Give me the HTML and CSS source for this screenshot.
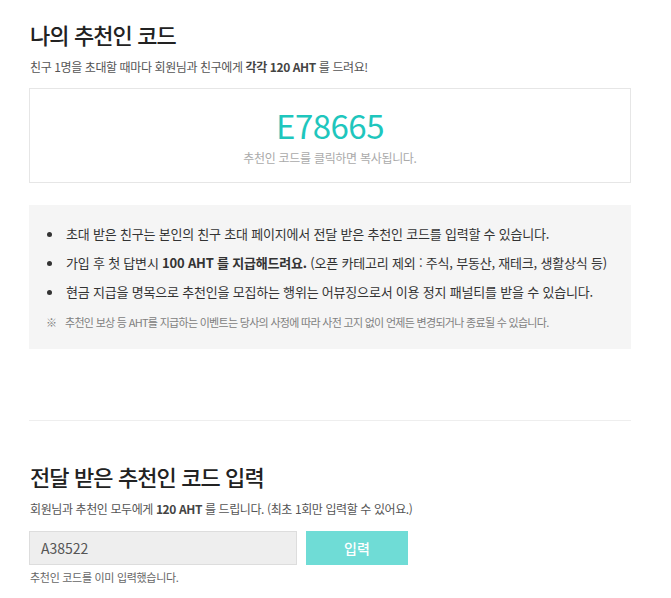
FILE: index.html
```html
<!DOCTYPE html>
<html lang="ko">
<head>
<meta charset="utf-8">
<link rel="stylesheet" href="styles.css">
</head>
<body>
<div class="page">
  <section class="section">
    <h2 class="title">나의 추천인 코드</h2>
    <p class="desc">친구 1명을 초대할 때마다 회원님과 친구에게 <b>각각 120 AHT</b> 를 드려요!</p>
    <div class="code-box">
      <div class="code">E78665</div>
      <div class="code-hint">추천인 코드를 클릭하면 복사됩니다.</div>
    </div>
    <div class="notice">
      <ul class="notice-list">
        <li>초대 받은 친구는 본인의 친구 초대 페이지에서 전달 받은 추천인 코드를 입력할 수 있습니다.</li>
        <li>가입 후 첫 답변시 <b>100 AHT 를 지급해드려요.</b> (오픈 카테고리 제외 : 주식, 부동산, 재테크, 생활상식 등)</li>
        <li>현금 지급을 명목으로 추천인을 모집하는 행위는 어뷰징으로서 이용 정지 패널티를 받을 수 있습니다.</li>
      </ul>
      <p class="notice-note"><span class="mark">※</span>추천인 보상 등 AHT를 지급하는 이벤트는 당사의 사정에 따라 사전 고지 없이 언제든 변경되거나 종료될 수 있습니다.</p>
    </div>
  </section>
  <hr class="divider">
  <section class="section section-2">
    <h2 class="title">전달 받은 추천인 코드 입력</h2>
    <p class="desc">회원님과 추천인 모두에게 <b>120 AHT</b> 를 드립니다. (최초 1회만 입력할 수 있어요.)</p>
    <div class="form-row">
      <div class="input">A38522</div>
      <button class="btn">입력</button>
    </div>
    <p class="help">추천인 코드를 이미 입력했습니다.</p>
  </section>
</div>
</body>
</html>
```
FILE: styles.css
```css
html, body {
  margin: 0;
  padding: 0;
  background: #fff;
}
body {
  font-family: "Noto Sans CJK KR", "Noto Sans", sans-serif;
  color: #333;
}
.page {
  width: 602px;
  margin-left: 29px;
  padding-top: 18px;
}
.title {
  margin: 0;
  font-size: 22px;
  font-weight: 500;
  line-height: 32px;
  letter-spacing: -0.9px;
  color: #222;
  padding-left: 1px;
}
.desc {
  margin: 8px 0 0;
  font-size: 12px;
  line-height: 18px;
  letter-spacing: -0.4px;
  color: #555;
  padding-left: 1px;
}
.desc b {
  font-weight: 700;
  color: #444;
}
.code-box {
  margin-top: 12px;
  border: 1px solid #e6e6e6;
  height: 95px;
  box-sizing: border-box;
  display: flex;
  flex-direction: column;
  align-items: center;
  padding-top: 14px;
}
.code {
  font-size: 33px;
  line-height: 44px;
  letter-spacing: -0.5px;
  color: #1ec6bd;
}
.code-hint {
  font-size: 12px;
  line-height: 18px;
  letter-spacing: -0.3px;
  color: #aaa;
  margin-top: 2px;
}
.notice {
  margin-top: 22px;
  background: #f5f5f5;
  padding: 14px 0 18px 17px;
}
.notice-list {
  margin: 0;
  padding: 0;
  list-style: none;
}
.notice-list li {
  position: relative;
  padding-left: 20px;
  font-size: 13px;
  line-height: 29px;
  letter-spacing: -0.2px;
  color: #333;
}
.notice-list li::before {
  content: "";
  position: absolute;
  left: 1px;
  top: 13px;
  width: 5px;
  height: 5px;
  border-radius: 50%;
  background: #333;
}
.notice-list b {
  font-weight: 700;
}
.notice-note {
  margin: 7px 0 0;
  font-size: 11px;
  line-height: 18px;
  letter-spacing: -0.7px;
  color: #808080;
}
.notice-note .mark {
  display: inline-block;
  width: 19px;
}
.divider {
  margin: 71px 0 0;
  border: 0;
  border-top: 1px solid #eee;
  height: 0;
}
.section-2 {
  padding-top: 39px;
}
.form-row {
  margin-top: 13px;
  display: flex;
  gap: 9px;
}
.input {
  width: 268px;
  height: 34px;
  box-sizing: border-box;
  background: #eee;
  border: 1px solid #ddd;
  padding-left: 11px;
  font-size: 14px;
  line-height: 32px;
  color: #555;
}
.btn {
  width: 102px;
  height: 34px;
  border: 0;
  margin: 0;
  padding: 0;
  background: #6fdcd6;
  color: #fff;
  font-family: inherit;
  font-size: 14px;
  font-weight: 500;
}
.help {
  margin: 4px 0 0;
  font-size: 11px;
  line-height: 16px;
  letter-spacing: -0.3px;
  color: #666;
  padding-left: 1px;
}
```
